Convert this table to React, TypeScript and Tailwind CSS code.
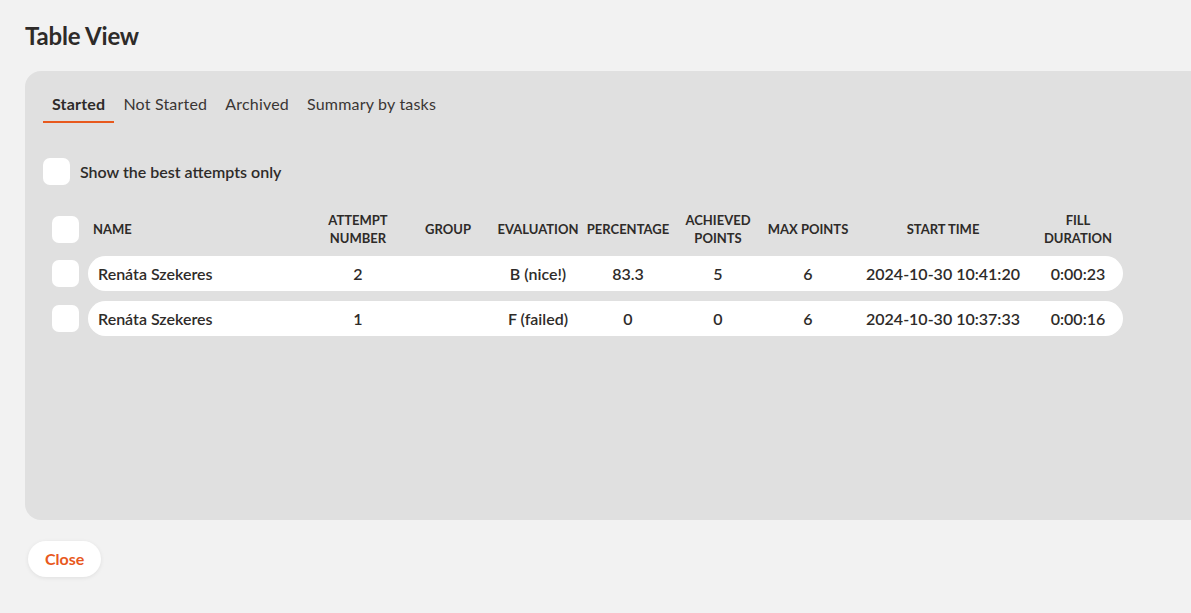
import { useState } from 'react';

const columns = [
  { key: 'name', label: 'NAME' },
  { key: 'attempt', label: 'ATTEMPT NUMBER' },
  { key: 'group', label: 'GROUP' },
  { key: 'evaluation', label: 'EVALUATION' },
  { key: 'percentage', label: 'PERCENTAGE' },
  { key: 'achieved', label: 'ACHIEVED POINTS' },
  { key: 'max', label: 'MAX POINTS' },
  { key: 'start', label: 'START TIME' },
  { key: 'duration', label: 'FILL DURATION' },
];

const rows = [
  {
    name: 'Renáta Szekeres',
    attempt: '2',
    group: '',
    evaluation: 'B (nice!)',
    percentage: '83.3',
    achieved: '5',
    max: '6',
    start: '2024-10-30 10:41:20',
    duration: '0:00:23',
  },
  {
    name: 'Renáta Szekeres',
    attempt: '1',
    group: '',
    evaluation: 'F (failed)',
    percentage: '0',
    achieved: '0',
    max: '6',
    start: '2024-10-30 10:37:33',
    duration: '0:00:16',
  },
];

const tabs = ['Started', 'Not Started', 'Archived', 'Summary by tasks'];

const gridCols = 'grid grid-cols-[225px_90px_90px_90px_90px_90px_90px_180px_90px] items-center';

const Box = () => <div className="w-[27px] h-[27px] rounded-[7px] bg-white shrink-0" />;

export default function App() {
  const [active, setActive] = useState(0);

  return (
    <div
      className="min-h-[613px] w-full overflow-hidden bg-[#f2f2f2] text-[#2e2b29]"
      style={{ fontFamily: 'Lato, "Noto Sans", sans-serif' }}
    >
      <h1 className="pl-[25px] pt-[18px] h-[71px] text-[24px] font-bold tracking-[-0.2px]">Table View</h1>

      {/* main panel */}
      <div className="ml-[25px] h-[449px] rounded-l-[16px] bg-[#e0e0e0] pl-[18px] pt-[21px]">
        <div className="flex">
          {tabs.map((t, i) => (
            <button
              key={t}
              onClick={() => setActive(i)}
              className={`px-[9px] pb-[5px] text-[16px] tracking-[0.2px] border-b-2 ${
                i === active ? 'font-bold border-[#e8591d]' : 'font-normal border-transparent text-[#3a3634]'
              }`}
            >
              {t}
            </button>
          ))}
        </div>

        <div className="mt-[35px] flex items-center gap-[10px]">
          <Box />
          <span className="text-[16px] font-semibold">Show the best attempts only</span>
        </div>

        {/* table */}
        <div className="mt-[26px] ml-[9px]">
          <div className="flex items-center h-[36px]">
            <div className="w-[36px] shrink-0">
              <Box />
            </div>
            <div className={gridCols}>
              {columns.map((c, i) => (
                <div
                  key={c.key}
                  className={`text-[13px] font-bold leading-[18px] text-[#2e2b29] ${
                    i === 0 ? 'pl-[5px]' : 'text-center'
                  }`}
                >
                  {c.label}
                </div>
              ))}
            </div>
          </div>

          <div className="mt-[9px] flex flex-col gap-[10px]">
            {rows.map((r, ri) => (
              <div key={ri} className="flex items-center">
                <div className="w-[36px] shrink-0">
                  <Box />
                </div>
                <div className={`${gridCols} h-[35px] rounded-full bg-white`}>
                  {columns.map((c, i) => (
                    <div
                      key={c.key}
                      className={`text-[16px] font-semibold whitespace-nowrap ${i === 0 ? 'pl-[10px]' : 'text-center'}`}
                    >
                      {r[c.key as keyof typeof r]}
                    </div>
                  ))}
                </div>
              </div>
            ))}
          </div>
        </div>
      </div>

      <button className="ml-[28px] mt-[21px] h-[36px] px-[17px] rounded-full bg-white text-[16px] font-bold text-[#e8591d] shadow-[0_1px_4px_rgba(0,0,0,0.08)]">
        Close
      </button>
    </div>
  );
}
